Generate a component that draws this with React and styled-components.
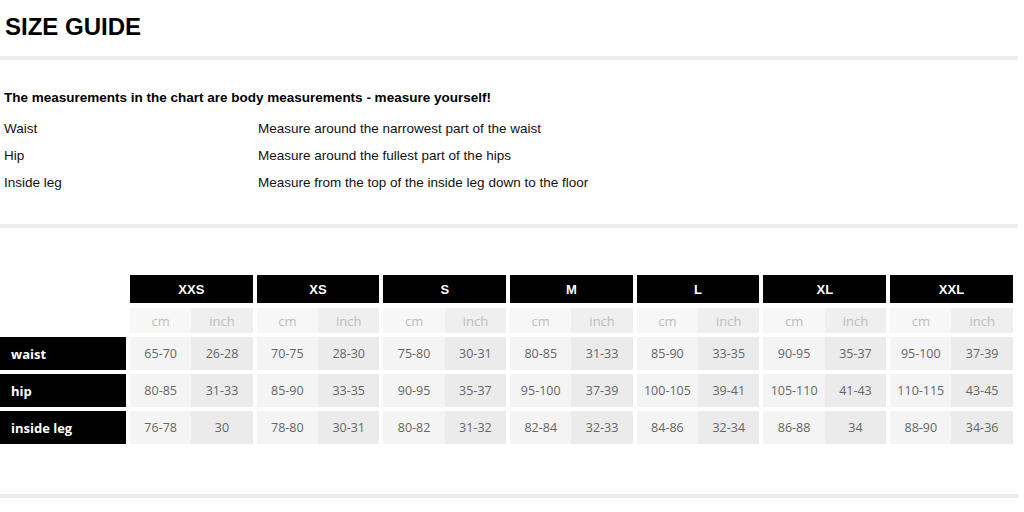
import { Fragment } from "react";
import styled, { createGlobalStyle } from "styled-components";

const GlobalStyle = createGlobalStyle`
  body {
    margin: 0;
    background: #fff;
    font-family: "Liberation Sans", Arial, sans-serif;
    color: #000;
  }
`;

const Page = styled.div`
  width: 1024px;
  height: 512px;
  overflow: hidden;
`;

const Title = styled.h1`
  margin: 13px 0 15px 5px;
  font-size: 24px;
  line-height: 28px;
  font-weight: 700;
`;

const Rule = styled.div`
  height: 4px;
  width: 1018px;
  background: #ededed;
  box-shadow: 0 0 1px #f2f2f2;
  margin-top: ${(p) => p.$before || 0}px;
  margin-bottom: ${(p) => p.$after || 0}px;
`;

const Intro = styled.p`
  margin: 30px 0 9px 4px;
  font-size: 13.5px;
  line-height: 16px;
  font-weight: 700;
`;

const Guide = styled.div`
  display: grid;
  grid-template-columns: 254px 1fr;
  margin: 0 0 28px 4px;
  font-size: 13.5px;
  line-height: 27px;
  color: #111;
`;

const Table = styled.div`
  display: flex;
  flex-direction: column;
  gap: 4px;
  font-family: "Open Sans", "Liberation Sans", sans-serif;
`;

const Row = styled.div`
  display: flex;
  gap: 4px;
  height: ${(p) => p.$h}px;
  margin-top: ${(p) => p.$mt || 0}px;
`;

const Label = styled.div`
  width: 126px;
  flex: none;
  background: ${(p) => (p.$empty ? "transparent" : "#000")};
  color: #fff;
  font-weight: 700;
  font-size: 13px;
  display: flex;
  align-items: center;
  padding-left: 11px;
  box-sizing: border-box;
`;

const SizeHead = styled.div`
  width: 122.7px;
  flex: none;
  background: #000;
  color: #fff;
  font-family: "Liberation Sans", Arial, sans-serif;
  font-weight: 700;
  font-size: 13px;
  display: flex;
  align-items: center;
  justify-content: center;
`;

const Group = styled.div`
  width: 122.7px;
  flex: none;
  display: flex;
`;

const Cell = styled.div`
  flex: 1;
  display: flex;
  align-items: center;
  justify-content: center;
  font-size: ${(p) => (p.$unit ? 13 : 12.5)}px;
  color: ${(p) => (p.$unit ? "#bdbdbd" : "#666")};
  background: ${(p) =>
    p.$unit
      ? p.$alt
        ? "#efefef"
        : "#f7f7f7"
      : p.$alt
      ? "#ebebeb"
      : "#f4f4f4"};
`;

const sizes = ["XXS", "XS", "S", "M", "L", "XL", "XXL"];

const rows = [
  {
    name: "waist",
    values: [
      ["65-70", "26-28"],
      ["70-75", "28-30"],
      ["75-80", "30-31"],
      ["80-85", "31-33"],
      ["85-90", "33-35"],
      ["90-95", "35-37"],
      ["95-100", "37-39"],
    ],
  },
  {
    name: "hip",
    values: [
      ["80-85", "31-33"],
      ["85-90", "33-35"],
      ["90-95", "35-37"],
      ["95-100", "37-39"],
      ["100-105", "39-41"],
      ["105-110", "41-43"],
      ["110-115", "43-45"],
    ],
  },
  {
    name: "inside leg",
    values: [
      ["76-78", "30"],
      ["78-80", "30-31"],
      ["80-82", "31-32"],
      ["82-84", "32-33"],
      ["84-86", "32-34"],
      ["86-88", "34"],
      ["88-90", "34-36"],
    ],
  },
];

const guide = [
  ["Waist", "Measure around the narrowest part of the waist"],
  ["Hip", "Measure around the fullest part of the hips"],
  ["Inside leg", "Measure from the top of the inside leg down to the floor"],
];

export default function App() {
  return (
    <Page>
      <GlobalStyle />
      <Title>SIZE GUIDE</Title>
      <Rule />
      <Intro>
        The measurements in the chart are body measurements - measure yourself!
      </Intro>
      <Guide>
        {guide.map(([k, v]) => (
          <Fragment key={k}>
            <span>{k}</span>
            <span>{v}</span>
          </Fragment>
        ))}
      </Guide>
      <Rule $after={47} />
      <Table>
        <Row $h={28}>
          <Label $empty />
          {sizes.map((s) => (
            <SizeHead key={s}>{s}</SizeHead>
          ))}
        </Row>
        <Row $h={25} $mt={1}>
          <Label $empty />
          {sizes.map((s) => (
            <Group key={s}>
              <Cell $unit>cm</Cell>
              <Cell $unit $alt>
                inch
              </Cell>
            </Group>
          ))}
        </Row>
        {rows.map((r) => (
          <Row $h={33} key={r.name}>
            <Label>{r.name}</Label>
            {r.values.map(([cm, inch], i) => (
              <Group key={i}>
                <Cell>{cm}</Cell>
                <Cell $alt>{inch}</Cell>
              </Group>
            ))}
          </Row>
        ))}
      </Table>
      <Rule $before={50} />
    </Page>
  );
}
